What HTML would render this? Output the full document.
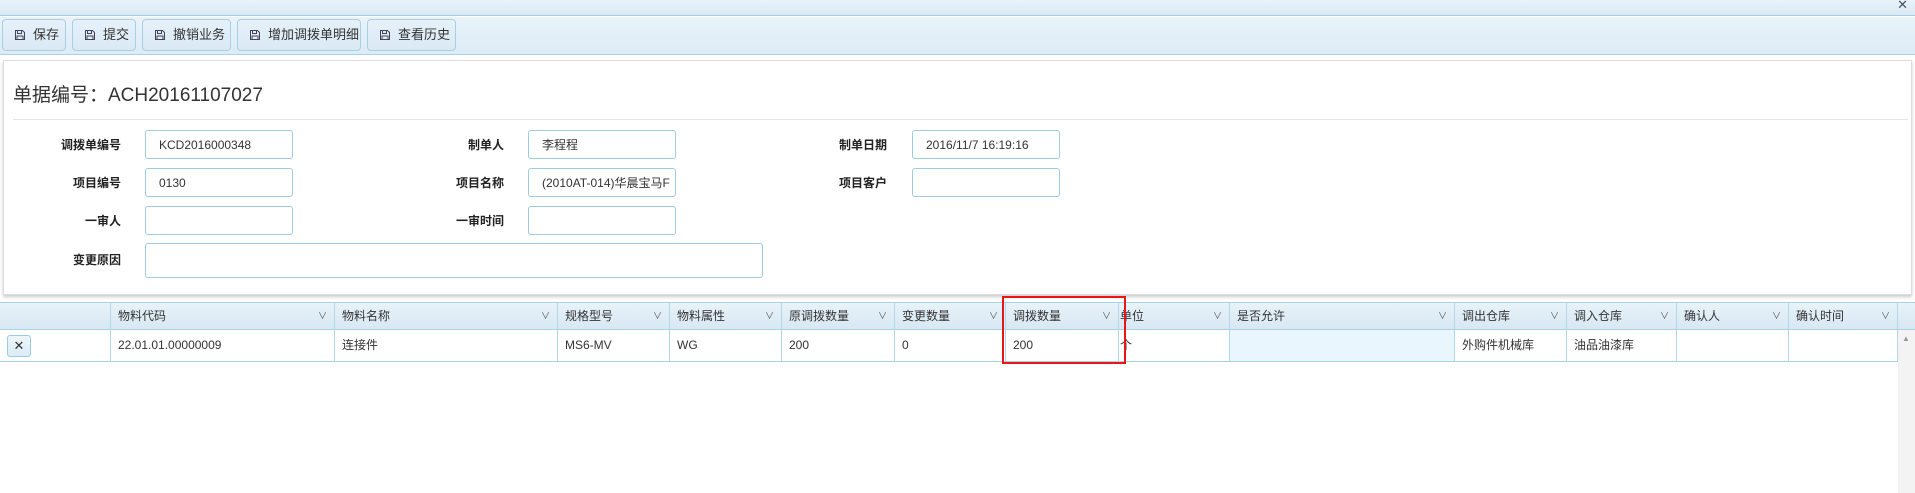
<!DOCTYPE html>
<html><head><meta charset="utf-8">
<style>
*{box-sizing:border-box;margin:0;padding:0}
body{width:1915px;height:493px;overflow:hidden;background:#fff;font-family:"Liberation Sans","Noto Sans CJK SC",sans-serif;color:#333;font-size:12px;position:relative}
.abs{position:absolute}
#top{left:0;top:0;width:1915px;height:16px;background:linear-gradient(#e8f2f9,#dbeaf4);border-bottom:1px solid #a6cde3}
#tb{left:0;top:17px;width:1915px;height:38px;background:linear-gradient(#e9f3fa,#dcebf5);border-bottom:1px solid #a9d3e6}
.btn{position:absolute;top:19px;height:32px;border:1px solid #a9cfe4;border-radius:4px;background:linear-gradient(#e6f1f9,#dae9f4);font-size:13px;line-height:30px;padding-left:30px;color:#333}
.btn svg{position:absolute;left:12px;top:10px}
#panel{left:3px;top:60px;width:1909px;height:235px;border:1px solid #ddd;box-shadow:0 2px 3px #ccc;background:#fff}
#title{left:13px;top:80px;font-size:19px;color:#333}
#hr{left:13px;top:119px;width:1895px;height:1px;background:#e5e5e5}
.lb{position:absolute;font-weight:bold;font-size:12px;text-align:right;width:100px;color:#222;line-height:16px}
.in{position:absolute;width:148px;height:29px;border:1px solid #9ecbe4;border-radius:3px;padding-left:13px;display:flex;align-items:center;font-size:12px;background:#fff;white-space:nowrap;overflow:hidden}
.hd{position:absolute;top:302px;height:28px;background:linear-gradient(#e8f2f9,#d8e8f3);border-top:1px solid #a8d3e6;border-bottom:1px solid #a8d3e6;border-right:1px solid #b3d7e8;line-height:26px;padding-left:7px;font-size:12px;color:#333}
.hd i{position:absolute;right:7px;top:0;font-style:normal;font-size:9px;color:#555}
.cl{position:absolute;top:330px;height:32px;border-bottom:1px solid #a8d3e6;border-right:1px solid #b3d7e8;line-height:31px;padding-left:7px;font-size:12px}
</style></head><body>
<div id="top" class="abs"><span style="position:absolute;right:7px;top:-3px;font-size:13px;color:#456">✕</span></div>
<div id="tb" class="abs"></div>
<div class="btn" style="left:2px;width:64px"><svg width="10" height="10" viewBox="0 0 10 10"><path d="M.5.5h7l2 2v7h-9z M2.5.5v3h4v-3 M2 9.5v-3.5h6v3.5" fill="none" stroke="#445" stroke-width="1"/></svg>保存</div>
<div class="btn" style="left:72px;width:64px"><svg width="10" height="10" viewBox="0 0 10 10"><path d="M.5.5h7l2 2v7h-9z M2.5.5v3h4v-3 M2 9.5v-3.5h6v3.5" fill="none" stroke="#445" stroke-width="1"/></svg>提交</div>
<div class="btn" style="left:142px;width:89px"><svg width="10" height="10" viewBox="0 0 10 10"><path d="M.5.5h7l2 2v7h-9z M2.5.5v3h4v-3 M2 9.5v-3.5h6v3.5" fill="none" stroke="#445" stroke-width="1"/></svg>撤销业务</div>
<div class="btn" style="left:237px;width:124px"><svg width="10" height="10" viewBox="0 0 10 10"><path d="M.5.5h7l2 2v7h-9z M2.5.5v3h4v-3 M2 9.5v-3.5h6v3.5" fill="none" stroke="#445" stroke-width="1"/></svg>增加调拨单明细</div>
<div class="btn" style="left:367px;width:89px"><svg width="10" height="10" viewBox="0 0 10 10"><path d="M.5.5h7l2 2v7h-9z M2.5.5v3h4v-3 M2 9.5v-3.5h6v3.5" fill="none" stroke="#445" stroke-width="1"/></svg>查看历史</div>

<div id="panel" class="abs"></div>
<div id="title" class="abs">单据编号：ACH20161107027</div>
<div id="hr" class="abs"></div>

<div class="lb" style="left:21px;top:137px">调拨单编号</div>
<div class="in" style="left:145px;top:130px">KCD2016000348</div>
<div class="lb" style="left:404px;top:137px">制单人</div>
<div class="in" style="left:528px;top:130px">李程程</div>
<div class="lb" style="left:787px;top:137px">制单日期</div>
<div class="in" style="left:912px;top:130px">2016/11/7 16:19:16</div>

<div class="lb" style="left:21px;top:175px">项目编号</div>
<div class="in" style="left:145px;top:168px">0130</div>
<div class="lb" style="left:404px;top:175px">项目名称</div>
<div class="in" style="left:528px;top:168px">(2010AT-014)华晨宝马F</div>
<div class="lb" style="left:787px;top:175px">项目客户</div>
<div class="in" style="left:912px;top:168px"></div>

<div class="lb" style="left:21px;top:213px">一审人</div>
<div class="in" style="left:145px;top:206px"></div>
<div class="lb" style="left:404px;top:213px">一审时间</div>
<div class="in" style="left:528px;top:206px"></div>

<div class="lb" style="left:21px;top:252px">变更原因</div>
<div class="in" style="left:145px;top:243px;width:618px;height:35px"></div>

<div class="hd" style="left:0;width:111px"></div>
<div class="hd" style="left:111px;width:224px">物料代码<i>∨</i></div>
<div class="hd" style="left:335px;width:223px">物料名称<i>∨</i></div>
<div class="hd" style="left:558px;width:112px">规格型号<i>∨</i></div>
<div class="hd" style="left:670px;width:112px">物料属性<i>∨</i></div>
<div class="hd" style="left:782px;width:113px">原调拨数量<i>∨</i></div>
<div class="hd" style="left:895px;width:111px">变更数量<i>∨</i></div>
<div class="hd" style="left:1006px;width:113px">调拨数量<i>∨</i></div>
<div class="hd" style="left:1119px;width:111px;padding-left:1px">单位<i>∨</i></div>
<div class="hd" style="left:1230px;width:225px">是否允许<i>∨</i></div>
<div class="hd" style="left:1455px;width:112px">调出仓库<i>∨</i></div>
<div class="hd" style="left:1567px;width:110px">调入仓库<i>∨</i></div>
<div class="hd" style="left:1677px;width:112px">确认人<i>∨</i></div>
<div class="hd" style="left:1789px;width:109px">确认时间<i>∨</i></div>
<div class="hd" style="left:1898px;width:17px;border-right:none"></div>

<div class="cl" style="left:0;width:111px"><div style="position:absolute;left:7px;top:5px;width:24px;height:22px;border:1px solid #9ecbe4;border-radius:3px;background:linear-gradient(#eef6fb,#dcebf5);text-align:center;line-height:20px;font-size:13px">✕</div></div>
<div class="cl" style="left:111px;width:224px">22.01.01.00000009</div>
<div class="cl" style="left:335px;width:223px">连接件</div>
<div class="cl" style="left:558px;width:112px">MS6-MV</div>
<div class="cl" style="left:670px;width:112px">WG</div>
<div class="cl" style="left:782px;width:113px">200</div>
<div class="cl" style="left:895px;width:111px">0</div>
<div class="cl" style="left:1006px;width:113px">200</div>
<div class="cl" style="left:1119px;width:111px;padding-left:1px">个</div>
<div class="cl" style="left:1230px;width:225px;background:#eaf6fd"></div>
<div class="cl" style="left:1455px;width:112px">外购件机械库</div>
<div class="cl" style="left:1567px;width:110px">油品油漆库</div>
<div class="cl" style="left:1677px;width:112px"></div>
<div class="cl" style="left:1789px;width:109px"></div>
<div class="abs" style="left:1898px;top:330px;width:17px;height:163px;background:#f3f3f3"><span style="position:absolute;left:4px;top:4px;font-size:8px;color:#999">▲</span></div>

<div class="abs" style="left:1002px;top:296px;width:124px;height:68px;border:2px solid #e8161b"></div>
</body></html>
